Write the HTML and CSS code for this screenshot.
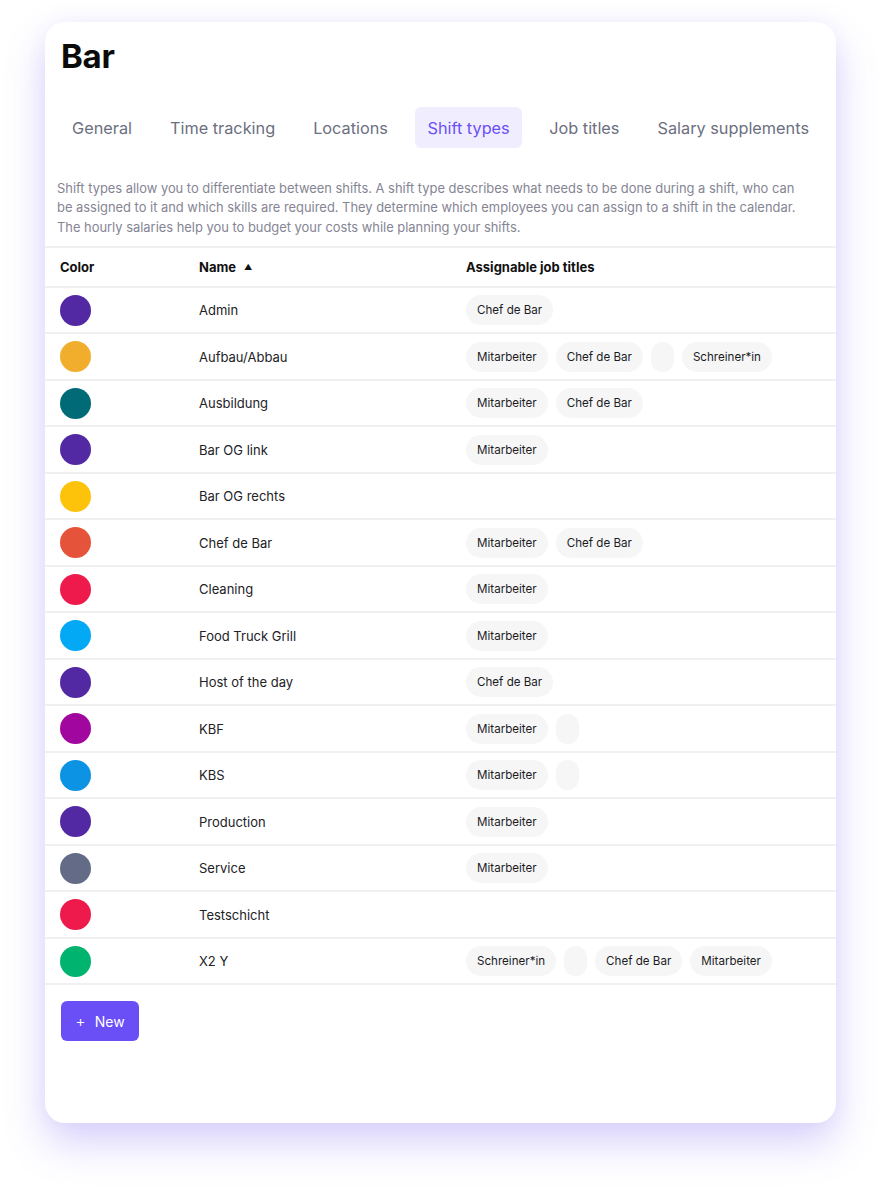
FILE: index.html
```html
<!DOCTYPE html>
<html lang="en">
<head>
<meta charset="utf-8">
<title>Bar – Shift types</title>
<link rel="stylesheet" href="styles.css">
</head>
<body>
<div class="card">
  <h1 class="title">Bar</h1>
  <nav class="tabs">
    <span class="tab">General</span>
    <span class="tab">Time tracking</span>
    <span class="tab">Locations</span>
    <span class="tab active">Shift types</span>
    <span class="tab">Job titles</span>
    <span class="tab">Salary supplements</span>
  </nav>
  <p class="desc">Shift types allow you to differentiate between shifts. A shift type describes what needs to be done during a shift, who can be assigned to it and which skills are required. They determine which employees you can assign to a shift in the calendar. The hourly salaries help you to budget your costs while planning your shifts.</p>
  <div class="table">
    <div class="row head">
      <div class="c-color">Color</div>
      <div class="c-name">Name <span class="sort">&#9650;</span></div>
      <div class="c-jobs">Assignable job titles</div>
    </div>
    <div class="row"><div class="c-color"><span class="dot purple"></span></div><div class="c-name">Admin</div><div class="c-jobs"><span class="chip">Chef de Bar</span></div></div>
    <div class="row"><div class="c-color"><span class="dot amber"></span></div><div class="c-name">Aufbau/Abbau</div><div class="c-jobs"><span class="chip">Mitarbeiter</span><span class="chip">Chef de Bar</span><span class="chip empty"></span><span class="chip">Schreiner*in</span></div></div>
    <div class="row"><div class="c-color"><span class="dot teal"></span></div><div class="c-name">Ausbildung</div><div class="c-jobs"><span class="chip">Mitarbeiter</span><span class="chip">Chef de Bar</span></div></div>
    <div class="row"><div class="c-color"><span class="dot purple"></span></div><div class="c-name">Bar OG link</div><div class="c-jobs"><span class="chip">Mitarbeiter</span></div></div>
    <div class="row"><div class="c-color"><span class="dot yellow"></span></div><div class="c-name">Bar OG rechts</div><div class="c-jobs"></div></div>
    <div class="row"><div class="c-color"><span class="dot orange"></span></div><div class="c-name">Chef de Bar</div><div class="c-jobs"><span class="chip">Mitarbeiter</span><span class="chip">Chef de Bar</span></div></div>
    <div class="row"><div class="c-color"><span class="dot red"></span></div><div class="c-name">Cleaning</div><div class="c-jobs"><span class="chip">Mitarbeiter</span></div></div>
    <div class="row"><div class="c-color"><span class="dot sky"></span></div><div class="c-name">Food Truck Grill</div><div class="c-jobs"><span class="chip">Mitarbeiter</span></div></div>
    <div class="row"><div class="c-color"><span class="dot purple"></span></div><div class="c-name">Host of the day</div><div class="c-jobs"><span class="chip">Chef de Bar</span></div></div>
    <div class="row"><div class="c-color"><span class="dot magenta"></span></div><div class="c-name">KBF</div><div class="c-jobs"><span class="chip">Mitarbeiter</span><span class="chip empty"></span></div></div>
    <div class="row"><div class="c-color"><span class="dot blue"></span></div><div class="c-name">KBS</div><div class="c-jobs"><span class="chip">Mitarbeiter</span><span class="chip empty"></span></div></div>
    <div class="row"><div class="c-color"><span class="dot purple"></span></div><div class="c-name">Production</div><div class="c-jobs"><span class="chip">Mitarbeiter</span></div></div>
    <div class="row"><div class="c-color"><span class="dot slate"></span></div><div class="c-name">Service</div><div class="c-jobs"><span class="chip">Mitarbeiter</span></div></div>
    <div class="row"><div class="c-color"><span class="dot red"></span></div><div class="c-name">Testschicht</div><div class="c-jobs"></div></div>
    <div class="row"><div class="c-color"><span class="dot green"></span></div><div class="c-name">X2 Y</div><div class="c-jobs"><span class="chip">Schreiner*in</span><span class="chip empty"></span><span class="chip">Chef de Bar</span><span class="chip">Mitarbeiter</span></div></div>
  </div>
  <button class="btn-new"><span class="plus">+</span>New</button>
</div>
</body>
</html>
```

FILE: styles.css
```css
* { box-sizing: border-box; }

html, body {
  margin: 0;
  padding: 0;
  background: #ffffff;
}

body {
  font-family: Inter, "Noto Sans", "Liberation Sans", sans-serif;
  color: #1a1a1a;
  padding: 22px 44px 67px 45px;
}

.card {
  width: 791px;
  height: 1101px;
  background: #ffffff;
  border-radius: 20px;
  box-shadow: 0 20px 40px rgba(104, 80, 240, 0.26), 0 0 20px rgba(104, 80, 240, 0.06);
  padding-top: 14px;
  overflow: hidden;
}

.title {
  margin: 0 0 0 16px;
  font-size: 33px;
  font-weight: 700;
  line-height: 40px;
  color: #0b0b0b;
  letter-spacing: -0.3px;
}

.tabs {
  display: flex;
  gap: 16px;
  margin: 31px 0 0 16px;
}

.tab {
  height: 41px;
  padding: 0 11px;
  display: flex;
  align-items: center;
  font-size: 16.3px;
  color: #6b6f80;
  border-radius: 6px;
}

.tab.active {
  padding: 0 12.5px;
  background: #f0edff;
  color: #6a4ff6;
}

.desc {
  margin: 31px 34px 0 12px;
  font-size: 12.9px;
  line-height: 19.3px;
  color: #858594;
}

.table {
  margin-top: 9px;
  border-top: 2px solid #f0f0f3;
}

.row {
  display: flex;
  align-items: center;
  height: 46.5px;
  border-bottom: 2px solid #f0f0f3;
  font-size: 13px;
  color: #222226;
}

.row.head {
  height: 40px;
  font-weight: 700;
  color: #111;
}

.c-color {
  width: 154px;
  padding-left: 15px;
  display: flex;
  align-items: center;
}

.c-name {
  width: 267px;
  display: flex;
  align-items: center;
  gap: 8px;
}

.sort {
  font-size: 8px;
  line-height: 1;
}

.c-jobs {
  flex: 1;
  display: flex;
  gap: 8px;
}

.dot {
  width: 31px;
  height: 31px;
  border-radius: 50%;
  display: block;
}

.purple { background: #5229a3; }
.amber { background: #f0ae2c; }
.teal { background: #006b76; }
.yellow { background: #fdc30b; }
.orange { background: #e5543a; }
.red { background: #ee1a4c; }
.sky { background: #03a9f4; }
.magenta { background: #a1079e; }
.blue { background: #0c93e4; }
.slate { background: #646b86; }
.green { background: #00b46f; }

.chip {
  height: 30px;
  padding: 0 11px;
  display: flex;
  align-items: center;
  border-radius: 15px;
  background: #f6f6f7;
  font-size: 11.6px;
  color: #1c1c1f;
}

.chip.empty {
  width: 23px;
  padding: 0;
}

.btn-new {
  margin: 16px 0 0 16px;
  height: 40px;
  width: 78px;
  border: none;
  border-radius: 6px;
  background: #6a4ff6;
  color: #ffffff;
  font-family: inherit;
  font-size: 14px;
  display: flex;
  align-items: center;
  justify-content: center;
  gap: 9px;
  padding: 0;
}

.plus {
  font-size: 16px;
  font-weight: 300;
  line-height: 1;
}
```
